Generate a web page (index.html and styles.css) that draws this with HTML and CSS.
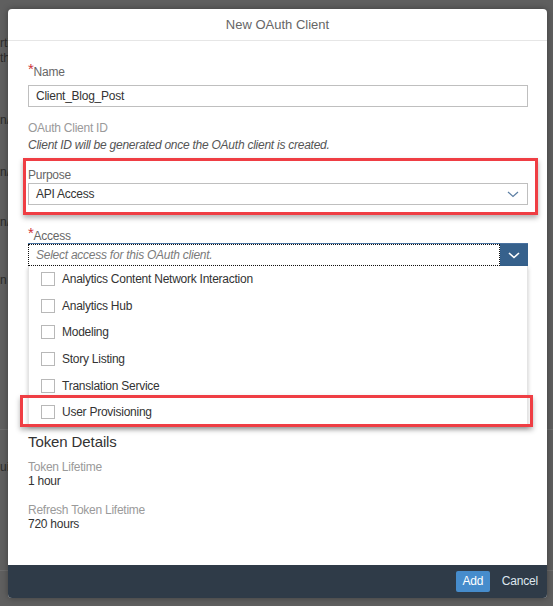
FILE: index.html
```html
<!DOCTYPE html>
<html lang="en">
<head>
<meta charset="utf-8">
<title>New OAuth Client</title>
<link rel="stylesheet" href="styles.css">
</head>
<body>
<div class="bg">
  <div class="bg-line l1">rti</div>
  <div class="bg-line l2">th</div>
  <div class="bg-line l3">n/c</div>
  <div class="bg-line l4">n/c</div>
  <div class="bg-line l5">n/c</div>
  <div class="bg-line l6">n</div>
  <div class="bg-rule r1"></div>
  <div class="bg-line l7">ui</div>
  <div class="bg-rule r2"></div>
</div>

<div class="dialog" role="dialog" aria-label="New OAuth Client">
  <div class="dlg-header">New OAuth Client</div>
  <div class="dlg-content">
    <div class="label req name-label"><span class="star">*</span>Name</div>
    <div class="input"><span class="value">Client_Blog_Post</span></div>

    <div class="label muted id-label">OAuth Client ID</div>
    <div class="hint">Client ID will be generated once the OAuth client is created.</div>

    <div class="highlight purpose">
      <div class="label purpose-label">Purpose</div>
      <div class="input select">
        <span class="value">API Access</span>
        <svg class="chev" width="12" height="7" viewBox="0 0 12 7"><path d="M1 1 L6 5.5 L11 1" fill="none" stroke="#5b7ea3" stroke-width="1.2"/></svg>
      </div>
    </div>

    <div class="label req access-label"><span class="star">*</span>Access</div>
    <div class="combo">
      <div class="combo-input"><span class="placeholder">Select access for this OAuth client.</span></div>
      <div class="combo-btn">
        <svg width="12" height="7" viewBox="0 0 12 7"><path d="M1 1 L6 5.5 L11 1" fill="none" stroke="#ffffff" stroke-width="1.6"/></svg>
      </div>
    </div>
    <ul class="list">
      <li class="item"><span class="cb"></span>Analytics Content Network Interaction</li>
      <li class="item"><span class="cb"></span>Analytics Hub</li>
      <li class="item"><span class="cb"></span>Modeling</li>
      <li class="item"><span class="cb"></span>Story Listing</li>
      <li class="item"><span class="cb"></span>Translation Service</li>
      <li class="item marked"><span class="cb"></span>User Provisioning<span class="annot"></span></li>
    </ul>

    <div class="section-title">Token Details</div>
    <div class="label muted t-label">Token Lifetime</div>
    <div class="t-value">1 hour</div>
    <div class="label muted t-label t2">Refresh Token Lifetime</div>
    <div class="t-value">720 hours</div>
  </div>
  <div class="dlg-footer">
    <button class="btn btn-add" type="button">Add</button>
    <button class="btn btn-cancel" type="button">Cancel</button>
  </div>
</div>
</body>
</html>
```
FILE: styles.css
```css
html, body {
  margin: 0;
  padding: 0;
}
body {
  width: 553px;
  height: 606px;
  overflow: hidden;
  background: #5f5f5f;
  font-family: "Liberation Sans", Arial, sans-serif;
  letter-spacing: -0.25px;
  position: relative;
}

/* dimmed page behind the modal */
.bg {
  color: #2b2b2b;
  font-size: 12px;
  line-height: 14px;
  letter-spacing: 0;
}
.bg-line {
  white-space: nowrap;
  margin-left: 0;
}
.l1 { padding-top: 36px; }
.l2 { margin-top: 1px; }
.l3 { margin-top: 48px; }
.l4 { margin-top: 38px; }
.l5 { margin-top: 36px; }
.l6 { margin-top: 44px; }
.bg-rule {
  height: 1px;
  background: #6c6c6c;
}
.r1 { margin-top: 142px; }
.l7 { margin-top: 30px; }
.r2 { margin-top: 96px; }

/* modal */
.dialog {
  position: absolute;
  left: 8px;
  top: 9px;
  width: 539px;
  height: 589px;
  background: #ffffff;
  border-radius: 4px;
  box-shadow: 0 0 6px rgba(0, 0, 0, 0.35);
  display: flex;
  flex-direction: column;
}
.dlg-header {
  height: 31px;
  border-bottom: 1px solid #e6e6e6;
  display: flex;
  align-items: center;
  justify-content: center;
  color: #666666;
  font-size: 13px;
  letter-spacing: 0;
}
.dlg-content {
  flex: 1;
  padding: 21px 19px 0 20px;
  display: flex;
  flex-direction: column;
}

.label {
  font-size: 12px;
  line-height: 18px;
  height: 18px;
  color: #666666;
}
.star {
  color: #d0343a;
  font-size: 15px;
  position: relative;
  top: -2px;
  margin-right: 0;
}
.muted { color: #9a9a9a; }

.input {
  margin-top: 5px;
  height: 20px;
  border: 1px solid #bfbfbf;
  display: flex;
  align-items: center;
  padding: 0 7px;
  font-size: 12px;
  color: #333333;
}
.id-label { margin-top: 13px; height: 17px; line-height: 17px; }
.hint {
  font-size: 12px;
  line-height: 16px;
  font-style: italic;
  color: #555555;
}

.highlight {
  border: 3px solid #ef3e44;
  box-shadow: 0 3px 5px rgba(0, 0, 0, 0.3);
}
.purpose {
  margin: 5px -10px 0 -5px;
  padding: 7px 7px 7px 2px;
}
.purpose-label {
  height: 15px;
  line-height: 15px;
}
.purpose .input { margin-top: 0; height: 20px; }
.select { justify-content: space-between; padding-right: 8px; }
.chev { display: block; }

.access-label {
  margin-top: 12px;
  height: 16px;
  line-height: 16px;
}
.combo {
  height: 22px;
  display: flex;
  background: #ffffff;
  border-top: 1px solid #4a72a0;
}
.combo-input {
  flex: 1;
  border: 1px dotted #111111;
  display: flex;
  align-items: center;
  padding: 0 7px;
  font-size: 12px;
}
.placeholder {
  color: #7a7a7a;
  font-style: italic;
}
.combo-btn {
  width: 28px;
  background: #36618c;
  display: flex;
  align-items: center;
  justify-content: center;
}

.list {
  list-style: none;
  margin: 0;
  padding: 0;
  background: #ffffff;
  border-left: 1px solid #e4e4e4;
  border-right: 1px solid #e4e4e4;
  box-shadow: 0 2px 4px rgba(0, 0, 0, 0.22);
}
.item {
  height: 26.6px;
  display: flex;
  align-items: center;
  padding-left: 12px;
  font-size: 12px;
  color: #333333;
  position: relative;
}
.cb {
  width: 12px;
  height: 12px;
  border: 1px solid #b8b8b8;
  margin-right: 7px;
  background: #ffffff;
}
.annot {
  position: absolute;
  left: -9px;
  right: -6px;
  top: -4px;
  bottom: -1px;
  border: 3px solid #ef3e44;
  box-shadow: 0 3px 5px rgba(0, 0, 0, 0.3);
}

.section-title {
  margin-top: 6px;
  font-size: 15px;
  line-height: 20px;
  color: #333333;
  letter-spacing: -0.1px;
}
.t-label {
  margin-top: 8px;
  height: 14px;
  line-height: 14px;
}
.t2 { margin-top: 15px; }
.t-value {
  font-size: 12px;
  line-height: 14px;
  color: #333333;
}

.dlg-footer {
  height: 32px;
  background: #2f3b48;
  border-radius: 0 0 4px 4px;
  display: flex;
  align-items: center;
  justify-content: flex-end;
  padding: 0 3px 1px 0;
}
.btn {
  font-family: "Liberation Sans", Arial, sans-serif;
  font-size: 12px;
  letter-spacing: -0.2px;
  border: none;
  height: 21px;
  border-radius: 2px;
  cursor: pointer;
}
.btn-add {
  background: #468ccc;
  color: #ffffff;
  width: 34px;
  padding: 0;
}
.btn-cancel {
  background: transparent;
  color: #dfe7ef;
  padding: 0 6px 0 12px;
}
```
